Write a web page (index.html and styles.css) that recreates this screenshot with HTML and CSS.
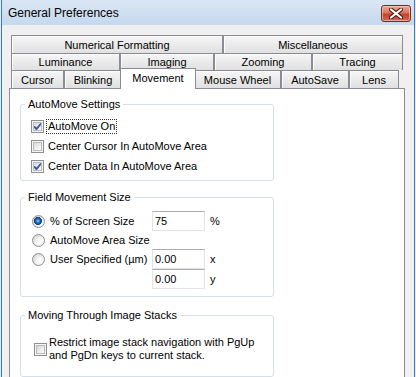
FILE: index.html
```html
<!DOCTYPE html>
<html lang="en">
<head>
  <meta charset="UTF-8">
  <title>General Preferences</title>
  <link rel="stylesheet" href="styles.css">
</head>
<body>

  <div class="window">
    <!-- Title bar -->
    <div class="titlebar">
      <span class="title">General Preferences</span>
      <div class="close">
        <svg width="14" height="11" viewBox="0 0 14 11">
          <path d="M2 1.5 L12 9.5 M12 1.5 L2 9.5" stroke="#5a1c14" stroke-width="4.2" stroke-linecap="round"/>
          <path d="M2 1.5 L12 9.5 M12 1.5 L2 9.5" stroke="#fff" stroke-width="2.2" stroke-linecap="round"/>
        </svg>
      </div>
    </div>

    <div class="client">
      <!-- Tab strip -->
      <div class="tabs">
        <div class="tab-row">
          <div class="tab t-numfmt">Numerical Formatting</div>
          <div class="tab t-misc">Miscellaneous</div>
        </div>
        <div class="tab-row mid">
          <div class="tab t-lum">Luminance</div>
          <div class="tab t-img">Imaging</div>
          <div class="tab t-zoom">Zooming</div>
          <div class="tab t-trace">Tracing</div>
        </div>
        <div class="tab-row">
          <div class="tab t-cursor">Cursor</div>
          <div class="tab t-blink">Blinking</div>
          <div class="tab t-move active">Movement</div>
          <div class="tab t-wheel">Mouse Wheel</div>
          <div class="tab t-save">AutoSave</div>
          <div class="tab t-lens">Lens</div>
        </div>
      </div>

      <!-- Movement page -->
      <div class="panel">
        <fieldset class="group g-auto">
          <legend>AutoMove Settings</legend>
          <div class="group-body">
            <div class="opt">
              <span class="cb on"></span><span class="lbl focus">AutoMove On</span>
            </div>
            <div class="opt">
              <span class="cb"></span><span class="lbl">Center Cursor In AutoMove Area</span>
            </div>
            <div class="opt">
              <span class="cb on"></span><span class="lbl">Center Data In AutoMove Area</span>
            </div>
          </div>
        </fieldset>

        <fieldset class="group g-field">
          <legend>Field Movement Size</legend>
          <div class="group-body size-grid">
            <div class="opt"><span class="radio on"></span><span class="lbl">% of Screen Size</span></div>
            <input class="num" type="text" value="75">
            <span class="unit">%</span>

            <div class="opt"><span class="radio"></span><span class="lbl">AutoMove Area Size</span></div>
            <span></span>
            <span></span>

            <div class="opt"><span class="radio"></span><span class="lbl">User Specified (µm)</span></div>
            <input class="num" type="text" value="0.00">
            <span class="unit">x</span>

            <span></span>
            <input class="num" type="text" value="0.00">
            <span class="unit">y</span>
          </div>
        </fieldset>

        <fieldset class="group g-stack">
          <legend>Moving Through Image Stacks</legend>
          <div class="group-body">
            <div class="opt wrap">
              <span class="cb"></span>
              <span class="lbl">Restrict image stack navigation with PgUp<br>and PgDn keys to current stack.</span>
            </div>
          </div>
        </fieldset>
      </div>
    </div>
  </div>

</body>
</html>
```

FILE: styles.css
```css
* {
  box-sizing: border-box;
}

body {
  margin: 0;
  background: #e4ecf6;
  font-family: "Liberation Sans", Arial, sans-serif;
  font-size: 11px;
  color: #000;
}

.window {
  margin-left: 1px;
  width: 414px;
  height: 377px;
  overflow: hidden;
  border-left: 1px solid #3b7ac4;
  border-right: 1px solid #3b7ac4;
  background: #f0f0f0;
}

/* title bar */
.titlebar {
  height: 25px;
  display: flex;
  align-items: center;
  justify-content: space-between;
  padding: 0 3px 0 6px;
  background: linear-gradient(#dae6f4, #c6d8ee);
}

.title {
  font-size: 12px;
}

.close {
  width: 30px;
  height: 17px;
  margin-top: 1px;
  display: flex;
  align-items: center;
  justify-content: center;
  border: 1px solid #6f2c22;
  border-radius: 3px;
  background: linear-gradient(#eaa897 0%, #d9765f 45%, #c2432b 55%, #cf6a4b 100%);
  box-shadow: inset 0 0 0 1px rgba(255, 210, 200, 0.6);
}

.client {
  padding: 10px 0 0 7px;
}

/* tabs */
.tabs {
  margin-left: 2px;
  width: 392px;
}

.tab-row {
  display: flex;
  height: 18px;
}

.tab-row.mid {
  height: 17px;
}

.tab {
  display: flex;
  align-items: center;
  justify-content: center;
  border: 1px solid #898c95;
  border-bottom: 0;
  background: linear-gradient(#f6f6f6, #e0e0e0);
  box-shadow: inset 1px 1px 0 #fcfcfc;
  white-space: nowrap;
}

.tab.active {
  position: relative;
  z-index: 1;
  margin: -2px -2px -1px;
  padding-bottom: 2px;
  background: #fff;
  box-shadow: none;
}

.t-numfmt { width: 212px; }
.t-misc { width: 180px; }
.t-lum { width: 109px; }
.t-img { width: 94px; }
.t-zoom { width: 98px; }
.t-trace { width: 91px; }
.t-cursor { width: 53px; }
.t-blink { width: 58px; }
.t-move { width: 76px; }
.t-wheel { width: 87px; }
.t-save { width: 68px; }
.t-lens { width: 50px; }

/* page */
.panel {
  width: 396px;
  height: 300px;
  background: #fff;
  border: 1px solid #898c95;
  padding: 9px 0 0 10px;
}

.group {
  width: 254px;
  margin: 0;
  padding-left: 0;
  padding-right: 0;
  border: 1px solid #d5dfe5;
  border-radius: 3px;
}

.group legend {
  margin-left: 4px;
  padding: 0 3px;
  line-height: 13px;
}

.g-auto {
  padding-top: 5px;
  padding-bottom: 4px;
}

.g-auto .group-body {
  padding-left: 10px;
}

.g-field {
  margin-top: 10px;
  padding-top: 7px;
  padding-bottom: 7px;
}

.g-field .group-body {
  padding-left: 11px;
}

.g-stack {
  margin-top: 12px;
  padding-top: 14px;
  padding-bottom: 14px;
}

.g-stack .group-body {
  padding-left: 13px;
}

.opt {
  display: flex;
  align-items: center;
  height: 20px;
}

.opt.wrap {
  height: auto;
}

.lbl {
  padding: 0 1px;
  margin-left: 3px;
  line-height: 13px;
}

.g-stack .lbl {
  margin-left: 1px;
}

.lbl.focus {
  outline: 1px dotted #333;
}

/* checkbox */
.cb {
  flex: none;
  width: 13px;
  height: 13px;
  border: 1px solid #8e8f8f;
  background: linear-gradient(135deg, #cfcfcf, #f6f6f6 70%, #fff);
  box-shadow: inset 0 0 0 1px #f4f4f4, inset 0 0 0 2px #b9bcc0;
}

.cb.on {
  background:
    url("data:image/svg+xml,%3Csvg xmlns='http://www.w3.org/2000/svg' width='11' height='11'%3E%3Cpath d='M2 5.5 L4.5 8 L9 2.5' fill='none' stroke='%23385aa8' stroke-width='1.9'/%3E%3C/svg%3E") center no-repeat,
    linear-gradient(135deg, #cfcfcf, #f6f6f6 70%, #fff);
}

/* radio */
.radio {
  flex: none;
  width: 13px;
  height: 13px;
  border-radius: 50%;
  border: 1px solid #8e8f8f;
  background: radial-gradient(circle at 65% 65%, #fff 0, #f2f2f2 40%, #c8c8c8 100%);
}

.radio.on {
  background:
    radial-gradient(circle at 45% 45%, #9fd4ff 0, #2a7fd8 1.6px, #134f9e 3px, #0d3c7c 3.7px, transparent 4.3px),
    radial-gradient(circle at 65% 65%, #fff 0, #f2f2f2 40%, #c8c8c8 100%);
}

/* field movement grid */
.size-grid {
  display: grid;
  grid-template-columns: 120px 53px auto;
  grid-template-rows: 20px 18px 20px 20px;
  align-items: center;
}

.size-grid .opt {
  height: auto;
}

.size-grid .lbl {
  margin-left: 4px;
}

.num {
  width: 53px;
  height: 20px;
  margin: 0;
  padding: 0 2px;
  border: 1px solid #e2e3ea;
  border-top-color: #abadb3;
  font-family: "Liberation Sans", Arial, sans-serif;
  font-size: 11px;
  color: #000;
  background: #fff;
}

.unit {
  padding-left: 5px;
}
```
